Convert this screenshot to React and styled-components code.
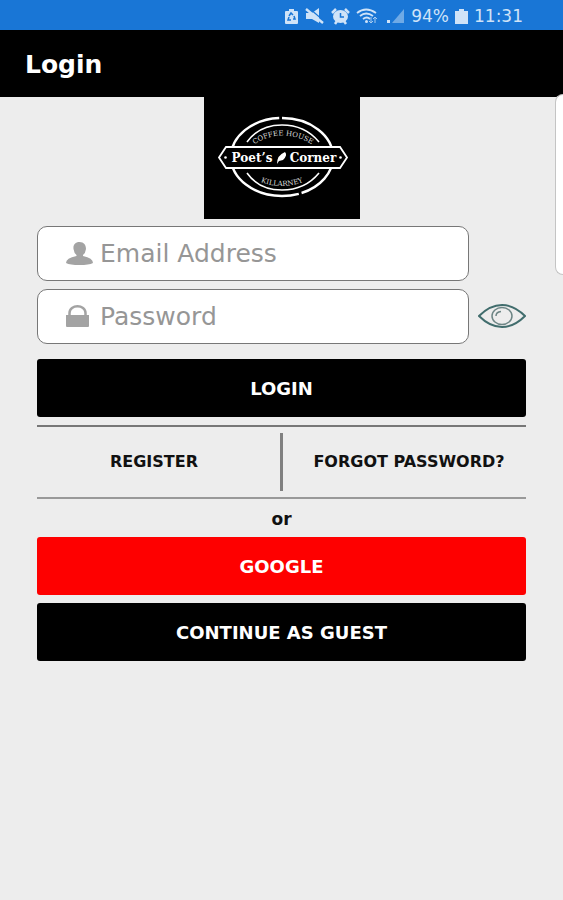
import styled, { createGlobalStyle } from "styled-components";

const GlobalStyle = createGlobalStyle`
  * {
    box-sizing: border-box;
  }
  body {
    margin: 0;
    background: #ededed;
    font-family: "DejaVu Sans", Roboto, sans-serif;
  }
`;

const Page = styled.div`
  position: relative;
  min-height: 100vh;
  background: #ededed;
`;
const StatusBar = styled.div`
  display: flex;
  align-items: center;
  justify-content: flex-end;
  gap: 6px;
  height: 30px;
  padding: 2px 40px 0 0;
  background: #1976d6;
  color: #cfe3f8;
  font-size: 17px;
  line-height: 24px;
`;
const StatusIcons = styled.div`
  display: flex;
  align-items: center;
  gap: 6px;
`;
const Header = styled.header`
  display: flex;
  align-items: center;
  height: 67px;
  padding: 2px 25px 0;
  background: #000;
`;
const Title = styled.h1`
  margin: 0;
  color: #fff;
  font-size: 25px;
  line-height: 32px;
  font-weight: 700;
`;
const Logo = styled.svg`
  display: block;
  width: 156px;
  height: 122px;
  margin: 0 auto;
  background: #000;
`;
const Form = styled.form`
  display: flex;
  flex-direction: column;
  gap: 8px;
  padding: 7px 37px 0;
`;
const FieldRow = styled.div`
  display: grid;
  grid-template-columns: minmax(0, 1fr) 48px;
  align-items: center;
  gap: 9px;
`;
const Field = styled.label`
  display: flex;
  align-items: center;
  gap: 6px;
  height: 55px;
  padding: 0 12px 0 27px;
  border: 1px solid #777;
  border-radius: 10px;
  background: #fff;
`;
const FieldIcon = styled.svg`
  flex: none;
  width: 29px;
  height: 25px;
  fill: #a3a3a3;
`;
const Input = styled.input`
  flex: 1;
  min-width: 0;
  padding: 0;
  border: 0;
  outline: 0;
  background: none;
  color: #333;
  font-family: inherit;
  font-size: 25px;
  line-height: 32px;
  &::placeholder {
    color: #969696;
    opacity: 1;
  }
`;
const EyeButton = styled.button`
  display: flex;
  padding: 0;
  border: 0;
  background: none;
  cursor: pointer;
`;
const Button = styled.button`
  height: 58px;
  margin-top: ${(props) => (props.$spaced ? "7px" : "0")};
  padding: 2px 0 0;
  border: 0;
  border-radius: 3px;
  background: ${(props) => (props.$red ? "#fe0000" : "#000")};
  color: #fff;
  font-family: inherit;
  font-size: 18px;
  line-height: 24px;
  font-weight: 700;
  cursor: pointer;
`;
const Links = styled.nav`
  display: grid;
  grid-template-columns: minmax(0, 1fr) 3px minmax(0, 1fr);
  align-items: center;
  column-gap: 9px;
  padding: 6px 0;
  border-top: 2px solid #777;
  border-bottom: 2px solid #999;
`;
const Divider = styled.span`
  height: 58px;
  background: #808080;
`;
const TextLink = styled.a`
  color: #111;
  font-size: 16px;
  line-height: 24px;
  font-weight: 700;
  text-align: center;
  text-decoration: none;
  white-space: nowrap;
`;
const Or = styled.p`
  margin: 0;
  padding-top: 2px;
  color: #111;
  font-size: 17px;
  line-height: 20px;
  font-weight: 700;
  text-align: center;
`;
const EdgePanel = styled.div`
  position: absolute;
  top: 94px;
  right: 0;
  width: 8px;
  height: 181px;
  border: 1px solid #c4c4c4;
  border-right: 0;
  border-radius: 8px 0 0 8px;
  background: #fff;
`;

const StatusGlyphs = () => (
  <StatusIcons aria-hidden="true">
    <svg width="15" height="17" viewBox="0 0 15 17">
      <path
        fill="#cfe3f8"
        d="M5 1h5v2h3q1 0 1 1v11q0 1-1 1H2q-1 0-1-1V4q0-1 1-1h3z"
      />
      <path
        d="M5 8l2-3 2 2M10 8l1 3H9M7 12H4l1-3"
        fill="none"
        stroke="#1976d6"
        strokeWidth="1.5"
      />
    </svg>
    <svg width="20" height="17" viewBox="0 0 20 17">
      <path fill="#cfe3f8" d="M1 5h6l7-5v15l-7-4H1z" />
      <path d="M4 0l15 13" stroke="#1976d6" strokeWidth="1.2" />
      <path d="M1 1l17 14" stroke="#cfe3f8" strokeWidth="2.4" />
    </svg>
    <svg width="19" height="17" viewBox="0 0 19 17">
      <path
        d="M1 5l4-4M18 5l-4-4M4 16l2-3M15 16l-2-3"
        stroke="#cfe3f8"
        strokeWidth="2.5"
      />
      <ellipse cx="9.5" cy="8.5" rx="7.5" ry="6.5" fill="#cfe3f8" />
      <path
        d="M9.5 5v4h3.5"
        fill="none"
        stroke="#1976d6"
        strokeWidth="1.5"
      />
    </svg>
    <svg width="24" height="17" viewBox="0 0 24 17">
      <g fill="none" stroke="#cfe3f8" strokeWidth="1.8">
        <path d="M1 5q9-7 19 0" />
        <path d="M4 8q6-5 13 0" />
        <path d="M7 11q4-3 7 0" />
      </g>
      <path
        d="M15 9v6m-2-2l2 2 2-2M19 15V9m-2 2l2-2 2 2"
        fill="none"
        stroke="#a7cbf0"
      />
      <circle cx="10.5" cy="13.5" r="1.5" fill="#cfe3f8" />
    </svg>
    <svg width="19" height="16" viewBox="0 0 19 16">
      <path d="M18 1v14H6z" fill="#6faae6" />
      <path d="M1 12h3v3H1z" fill="#cfe3f8" />
    </svg>
  </StatusIcons>
);

const BrandLogo = () => (
  <Logo viewBox="0 0 156 122" role="img" aria-label="Poet's Corner">
    <g fill="none" stroke="#fff">
      <ellipse
        cx="78"
        cy="60"
        rx="51"
        ry="39"
        strokeWidth="2.4"
        pathLength="100"
        strokeDasharray="18 1 55 1 25"
      />
      <path d="M43 45Q55 28 78 28T115 45" strokeWidth="1.6" />
      <path d="M43 76Q55 93 78 93T115 76" strokeWidth="1.6" />
    </g>
    <path
      d="M22 50H136L143 60.500L136 71H22L15 60.500Z"
      fill="#000"
      stroke="#fff"
      strokeWidth="1.8"
    />
    <circle cx="21.5" cy="60.5" r="1.3" fill="#fff" />
    <circle cx="136.5" cy="60.5" r="1.3" fill="#fff" />
    <path d="M73 67Q73 58 81 55Q84 58 79 63L75 64Z" fill="#fff" />
    <path id="arcTop" d="M46 50Q78 27 112 50" fill="none" />
    <path id="arcBottom" d="M48 81Q78 97 108 81" fill="none" />
    <g fill="#fff" fontFamily="DejaVu Serif, serif" textAnchor="middle">
      <g fontSize="12" fontWeight="700">
        <text x="48" y="65">
          Poet’s
        </text>
        <text x="109" y="65">
          Corner
        </text>
      </g>
      <g fontSize="7" fill="#ddd">
        <text>
          <textPath href="#arcTop" startOffset="50%">
            COFFEE HOUSE
          </textPath>
        </text>
        <text>
          <textPath href="#arcBottom" startOffset="50%">
            KILLARNEY
          </textPath>
        </text>
      </g>
    </g>
  </Logo>
);

const App = () => {
  return (
    <Page>
      <GlobalStyle />
      <StatusBar>
        <StatusGlyphs />
        <span>94%</span>
        <svg width="13" height="17" viewBox="0 0 13 17" aria-hidden="true">
          <path fill="#cfe3f8" d="M4 1h5v2h4v13H0V3h4z" />
        </svg>
        <span>11:31</span>
      </StatusBar>
      <Header>
        <Title>Login</Title>
      </Header>
      <BrandLogo />
      <Form onSubmit={(e) => e.preventDefault()}>
        <FieldRow>
          <Field>
            <FieldIcon viewBox="0 0 29 25" aria-hidden="true">
              <path d="M14.500 1C10 1 8 4 8.500 8Q9 12 11.500 14V15Q1 17 1 22Q5 24 14.500 24T28 22Q28 17 18 15V14Q20.500 12 21 8C21 4 19 1 14.500 1Z" />
            </FieldIcon>
            <Input
              type="email"
              placeholder="Email Address"
              aria-label="Email Address"
            />
          </Field>
        </FieldRow>
        <FieldRow>
          <Field>
            <FieldIcon viewBox="0 0 29 25" aria-hidden="true">
              <path d="M1 11H24V22Q24 23 23 23H2Q1 23 1 22Z" />
              <path
                d="M4.500 12V9C4.500 0 20.500 0 20.500 9V12"
                fill="none"
                stroke="#a3a3a3"
                strokeWidth="2.5"
              />
            </FieldIcon>
            <Input
              type="password"
              placeholder="Password"
              aria-label="Password"
            />
          </Field>
          <EyeButton type="button" aria-label="Show password">
            <svg width="48" height="26" viewBox="0 0 48 26" fill="none">
              <path
                d="M1 12Q12 1 24 1T47 12Q36 23 24 23T1 12Z"
                stroke="#416d6d"
                strokeWidth="2"
              />
              <ellipse
                cx="24"
                cy="12"
                rx="10"
                ry="8.5"
                stroke="#6d8585"
                strokeWidth="1.5"
              />
              <path
                d="M18 12Q18 8 23 7.500"
                stroke="#6d8585"
                strokeWidth="1.5"
              />
            </svg>
          </EyeButton>
        </FieldRow>
        <Button type="submit" $spaced>
          LOGIN
        </Button>
        <Links>
          <TextLink href="#">REGISTER</TextLink>
          <Divider />
          <TextLink href="#">FORGOT PASSWORD?</TextLink>
        </Links>
        <Or>or</Or>
        <Button type="button" $red>
          GOOGLE
        </Button>
        <Button type="button">CONTINUE AS GUEST</Button>
      </Form>
      <EdgePanel />
    </Page>
  );
};
export default App;
